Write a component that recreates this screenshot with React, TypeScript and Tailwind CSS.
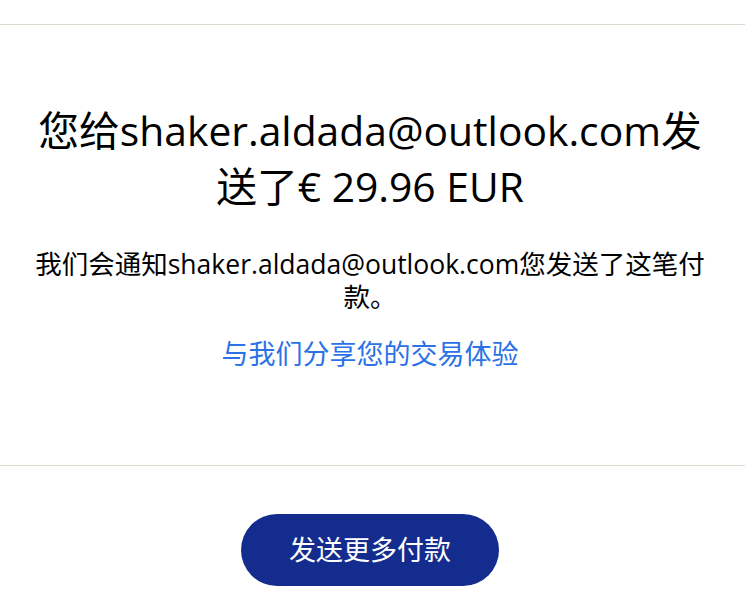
import React from "react";

const RECIPIENT = "shaker.aldada@outlook.com";

export default function App() {
  return (
    <div
      className="min-h-screen bg-white text-[#000000]"
      style={{ fontFamily: '"Open Sans", "Noto Sans CJK SC", sans-serif' }}
    >
      {/* Top divider */}
      <div className="pt-6">
        <div className="h-px bg-[#dcdacf]" />
      </div>

      {/* Confirmation */}
      <section className="pl-8 pr-[37px] pt-[77px] pb-[94px] text-center">
        <h1 className="text-[40.8px] leading-[56px] font-normal">
          您给{RECIPIENT}发送了€ 29.96 EUR
        </h1>
        <p className="mt-[34px] text-[26.5px] leading-[33px]">
          我们会通知{RECIPIENT}您发送了这笔付款。
        </p>
        <a href="#" className="mt-[23px] block text-[27px] leading-[34px] text-[#2b72e6]">
          与我们分享您的交易体验
        </a>
      </section>

      <div className="h-px bg-[#dcdacf]" />

      {/* Action */}
      <div className="flex justify-center pt-12 pr-[5px]">
        <button className="h-[72px] w-[258px] rounded-full bg-[#142c8e] text-[27px] text-white">
          发送更多付款
        </button>
      </div>
    </div>
  );
}
